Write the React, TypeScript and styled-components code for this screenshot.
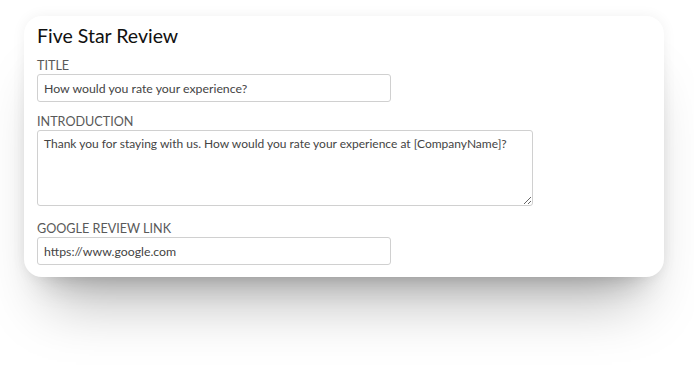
import styled, { createGlobalStyle } from 'styled-components';

const GlobalStyle = createGlobalStyle`
  html, body {
    margin: 0;
    padding: 0;
    background: #ffffff;
  }

  body {
    font-family: Lato, 'Noto Sans', sans-serif;
  }
`;

const Page = styled.div`
  width: 694px;
  height: 376px;
  padding: 16px 30px 0 24px;
  box-sizing: border-box;
  overflow: hidden;
`;

const Card = styled.section`
  width: 640px;
  box-sizing: border-box;
  padding: 8px 13px 12px 13px;
  background: #ffffff;
  border-radius: 18px;
  box-shadow:
    0 48px 56px -24px rgba(0, 0, 0, 0.28),
    0 22px 28px -20px rgba(0, 0, 0, 0.22),
    0 0 14px rgba(0, 0, 0, 0.06);
`;

const Heading = styled.h2`
  margin: 0 0 11px;
  font-size: 19.5px;
  line-height: 24px;
  font-weight: 400;
  color: #111111;
`;

const Field = styled.label<{ $gap?: number }>`
  display: flex;
  flex-direction: column;
  align-items: flex-start;
  margin-top: ${({ $gap = 0 }) => $gap}px;
`;

const Label = styled.span`
  font-size: 12.6px;
  line-height: 14px;
  color: #595959;
  text-transform: uppercase;
  margin-bottom: 1px;
`;

const TextInput = styled.input<{ $width: number }>`
  width: ${({ $width }) => $width}px;
  height: 28px;
  box-sizing: border-box;
  padding: 0 6px;
  border: 1px solid #d0d0d0;
  border-radius: 3px;
  font-family: Lato, 'Noto Sans', sans-serif;
  font-size: 12.3px;
  color: #444444;
  background: #ffffff;
  outline: none;
`;

const TextArea = styled.textarea<{ $width: number }>`
  width: ${({ $width }) => $width}px;
  height: 76px;
  box-sizing: border-box;
  display: block;
  margin: 0;
  padding: 5px 6px;
  border: 1px solid #d0d0d0;
  border-radius: 3px;
  font-family: Lato, 'Noto Sans', sans-serif;
  font-size: 12px;
  line-height: 15px;
  color: #444444;
  background: #ffffff;
  resize: both;
  outline: none;
`;

const App = () => {
  return (
    <>
      <GlobalStyle />
      <Page>
        <Card>
          <Heading>Five Star Review</Heading>
          <Field>
            <Label>Title</Label>
            <TextInput $width={354} defaultValue='How would you rate your experience?' />
          </Field>
          <Field $gap={13}>
            <Label>Introduction</Label>
            <TextArea
              $width={496}
              defaultValue='Thank you for staying with us. How would you rate your experience at [CompanyName]?'
            />
          </Field>
          <Field $gap={16}>
            <Label>Google Review Link</Label>
            <TextInput $width={354} defaultValue='https://www.google.com' />
          </Field>
        </Card>
      </Page>
    </>
  );
};

export default App;
